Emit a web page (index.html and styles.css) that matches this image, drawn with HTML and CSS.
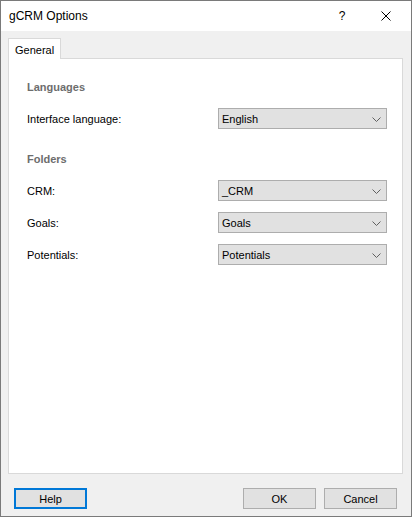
FILE: index.html
```html
<!DOCTYPE html>
<html>
<head>
<meta charset="utf-8">
<link rel="stylesheet" href="styles.css">
</head>
<body>
<div class="window">
  <div class="titlebar">
    <div class="title">gCRM Options</div>
    <div class="tbtn help-q">?</div>
    <div class="tbtn close">
      <svg width="10" height="10" viewBox="0 0 10 10"><path d="M0.5 0.5 L9.5 9.5 M9.5 0.5 L0.5 9.5" stroke="#000" stroke-width="1" fill="none"/></svg>
    </div>
  </div>
  <div class="body">
    <div class="tabstrip">
      <div class="tab">General</div>
      <div class="tabfill"></div>
    </div>
    <div class="panel">
      <div class="section">
        <div class="heading">Languages</div>
        <div class="row">
          <div class="label">Interface language:</div>
          <div class="combo"><span>English</span><svg class="chev" width="9" height="5" viewBox="0 0 9 5"><polyline points="0.5,0.5 4.5,4.5 8.5,0.5" stroke="#606060" fill="none"/></svg></div>
        </div>
      </div>
      <div class="section">
        <div class="heading">Folders</div>
        <div class="row">
          <div class="label">CRM:</div>
          <div class="combo"><span>_CRM</span><svg class="chev" width="9" height="5" viewBox="0 0 9 5"><polyline points="0.5,0.5 4.5,4.5 8.5,0.5" stroke="#606060" fill="none"/></svg></div>
        </div>
        <div class="row">
          <div class="label">Goals:</div>
          <div class="combo"><span>Goals</span><svg class="chev" width="9" height="5" viewBox="0 0 9 5"><polyline points="0.5,0.5 4.5,4.5 8.5,0.5" stroke="#606060" fill="none"/></svg></div>
        </div>
        <div class="row">
          <div class="label">Potentials:</div>
          <div class="combo"><span>Potentials</span><svg class="chev" width="9" height="5" viewBox="0 0 9 5"><polyline points="0.5,0.5 4.5,4.5 8.5,0.5" stroke="#606060" fill="none"/></svg></div>
        </div>
      </div>
    </div>
    <div class="footer">
      <div class="btn default">Help</div>
      <div class="spacer"></div>
      <div class="btn">OK</div>
      <div class="btn">Cancel</div>
    </div>
  </div>
</div>
</body>
</html>
```
FILE: styles.css
```css
* { box-sizing: border-box; }
html, body { margin: 0; padding: 0; }
body {
  font-family: "Liberation Sans", Arial, sans-serif;
  font-size: 11px;
  color: #000;
  background: #f0f0f0;
}
.window {
  width: 412px;
  height: 517px;
  border: 1px solid #7a7a7a;
  display: flex;
  flex-direction: column;
  background: #f0f0f0;
}
.titlebar {
  height: 30px;
  background: #fff;
  display: flex;
  align-items: center;
  padding-left: 8px;
  padding-right: 3px;
  flex: none;
}
.title {
  flex: 1;
  font-size: 12px;
}
.tbtn {
  width: 44px;
  height: 30px;
  display: flex;
  align-items: center;
  justify-content: center;
  font-size: 12px;
}
.close svg { display: block; }
.body {
  flex: 1;
  display: flex;
  flex-direction: column;
  padding: 7px 8px 7px 7px;
}
.tabstrip {
  display: flex;
  height: 21px;
  flex: none;
}
.tab {
  width: 53px;
  height: 21px;
  background: #fff;
  border: 1px solid #d9d9d9;
  border-bottom: none;
  padding: 5px 0 0 6px;
  line-height: 13px;
}
.tabfill {
  flex: 1;
  border-bottom: 1px solid #d9d9d9;
}
.panel {
  flex: 1;
  background: #fff;
  border: 1px solid #d9d9d9;
  border-top: none;
  padding: 22px 15px 0 18px;
  display: flex;
  flex-direction: column;
  gap: 24px;
}
.section {
  display: flex;
  flex-direction: column;
  gap: 11px;
}
.heading {
  font-weight: bold;
  color: #6d6d6d;
  line-height: 13px;
  margin-bottom: 3px;
}
.row {
  display: flex;
  align-items: center;
  justify-content: space-between;
  height: 21px;
}
.label {
  line-height: 13px;
  padding-top: 2px;
}
.combo {
  width: 169px;
  height: 21px;
  background: #e1e1e1;
  border: 1px solid #adadad;
  display: flex;
  align-items: center;
  padding: 1px 5px 0 3px;
}
.combo span { flex: 1; }
.chev { display: block; }
.footer {
  flex: none;
  display: flex;
  gap: 8px;
  margin-top: 14px;
  padding: 0 6px 0 6px;
  height: 21px;
}
.spacer { flex: 1; }
.btn {
  width: 73px;
  height: 21px;
  background: #e1e1e1;
  border: 1px solid #adadad;
  display: flex;
  align-items: center;
  justify-content: center;
  padding-top: 1px;
}
.btn.default {
  border: 2px solid #0078d7;
}
```
